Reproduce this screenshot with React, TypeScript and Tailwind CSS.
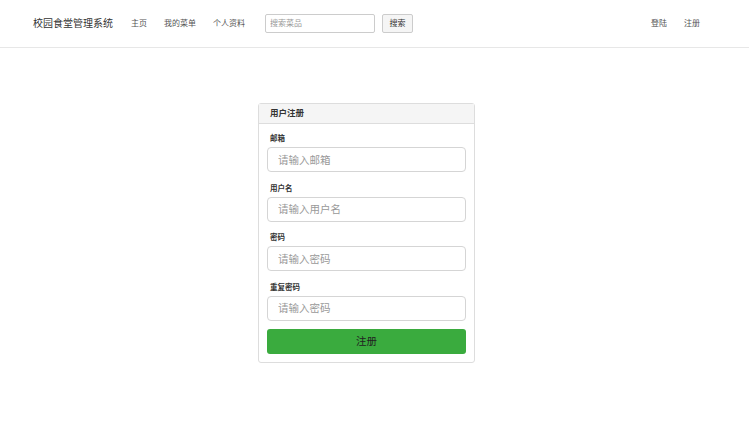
const fields = [
  { label: "邮箱", placeholder: "请输入邮箱", type: "email" },
  { label: "用户名", placeholder: "请输入用户名", type: "text" },
  { label: "密码", placeholder: "请输入密码", type: "password" },
  { label: "重复密码", placeholder: "请输入密码", type: "password" },
];

const App = () => {
  return (
    <div className="min-h-[429px] bg-white text-[#333] font-['Liberation_Sans','Noto_Sans_CJK_SC',sans-serif]">
      {/* navbar */}
      <nav className="h-[48px] border-b border-[#e7e7e7] flex items-center pl-[33px] pr-[49px]">
        <span className="text-[10px] text-[#333] mr-[18px]">校园食堂管理系统</span>
        <div className="flex gap-[17px] text-[8px] text-[#555]">
          <a>主页</a>
          <a>我的菜单</a>
          <a>个人资料</a>
        </div>
        <form className="flex items-center ml-[20px] gap-[7px]">
          <input
            className="w-[110px] h-[19px] border border-[#ccc] rounded-[2px] px-[4px] text-[8px] placeholder:text-[#999] outline-none"
            placeholder="搜索菜品"
          />
          <button
            type="button"
            className="w-[31px] h-[19px] border border-[#ccc] rounded-[2px] bg-[#f5f5f5] text-[8px] text-[#333]"
          >
            搜索
          </button>
        </form>
        <div className="ml-auto flex gap-[17px] text-[8px] text-[#555]">
          <a>登陆</a>
          <a>注册</a>
        </div>
      </nav>

      {/* register panel */}
      <div className="flex justify-center pt-[55px] pr-[16px]">
        <div className="w-[217px] border border-[#ddd] rounded-[3px] bg-white">
          <div className="h-[20px] bg-[#f5f5f5] border-b border-[#ddd] flex items-center px-[11px] text-[8.5px] font-bold text-[#333]">
            用户注册
          </div>
          <div className="flex flex-col px-[8px] pt-[9px] pb-[8px]">
            {fields.map((f) => (
              <div key={f.label} className="mb-[10.5px]">
                <label className="block text-[7.5px] font-bold text-[#333] h-[14px] pl-[3px]">{f.label}</label>
                <input
                  type={f.type === "password" ? "text" : f.type}
                  placeholder={f.placeholder}
                  className="block w-full h-[25px] border border-[#d5d5d5] rounded-[4px] px-[10px] text-[10.5px] placeholder:text-[#999] outline-none"
                />
              </div>
            ))}
            <button
              type="button"
              className="block w-full h-[25px] -mt-[2px] rounded-[3px] bg-[#3aab3e] text-[10.5px] text-[#222]"
            >
              注册
            </button>
          </div>
        </div>
      </div>
    </div>
  );
};

export default App;
